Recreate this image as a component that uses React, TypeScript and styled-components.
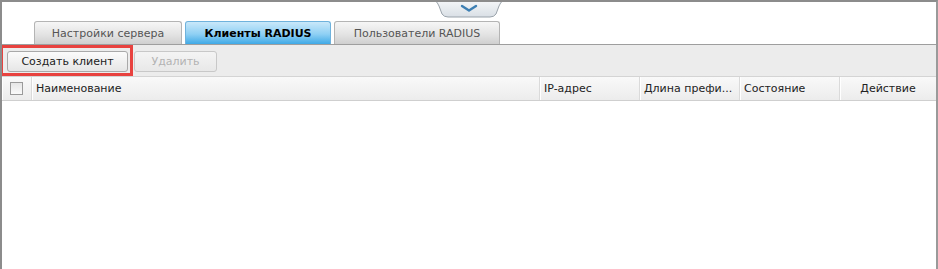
import React from "react";
import styled, { createGlobalStyle } from "styled-components";

const Global = createGlobalStyle`
  html, body { margin: 0; padding: 0; background: #fff; }
  body { font-family: "DejaVu Sans", Verdana, sans-serif; font-size: 11px; color: #222; }
`;

const Frame = styled.div`
  position: relative;
  width: 938px;
  height: 269px;
  box-sizing: border-box;
  border-top: 2px solid #8c8c8c;
  border-left: 2px solid #8c8c8c;
  border-right: 2px solid #9a9a9a;
  display: flex;
  flex-direction: column;
  background: #fff;
  overflow: hidden;
`;

const TopArea = styled.div`
  position: relative;
  height: 19px;
  display: flex;
  justify-content: center;
`;

const Toggle = styled.div`
  position: absolute;
  top: -1px;
  left: 427px;
  width: 80px;
  height: 17px;
`;

const TabsRow = styled.div`
  display: flex;
  align-items: flex-end;
  gap: 3px;
  padding-left: 32px;
  height: 23px;
`;

const Tab = styled.div<{ $active?: boolean; $w: number }>`
  box-sizing: border-box;
  width: ${(p) => p.$w}px;
  height: 23px;
  border: 1px solid ${(p) => (p.$active ? "#6fb2dc" : "#b4b4b4")};
  border-bottom: none;
  border-radius: 3px 3px 0 0;
  display: flex;
  align-items: center;
  justify-content: center;
  padding-top: 1px;
  font-weight: ${(p) => (p.$active ? "bold" : "normal")};
  color: ${(p) => (p.$active ? "#000" : "#555")};
  background: ${(p) =>
    p.$active
      ? "linear-gradient(#c9e8fa 0%, #8fd0f4 55%, #3fa9e6 100%)"
      : "linear-gradient(#f6f6f6 0%, #e2e2e2 60%, #cfcfcf 100%)"};
`;

const Toolbar = styled.div`
  position: relative;
  height: 32px;
  box-sizing: border-box;
  border-top: 1px solid #9e9e9e;
  background: #ececec;
  display: flex;
  align-items: center;
  gap: 6px;
  padding: 0 0 0 5px;
`;

const Button = styled.button<{ $w: number }>`
  box-sizing: border-box;
  width: ${(p) => p.$w}px;
  height: 21px;
  margin-top: 1px;
  font-family: inherit;
  font-size: 11px;
  border: 1px solid #a9a9a9;
  border-radius: 3px;
  background: linear-gradient(#fbfbfb, #e6e6e6);
  color: #222;
  padding: 0;
  &:disabled {
    color: #b3b3b3;
    border-color: #c8c8c8;
    background: linear-gradient(#f4f4f4, #e8e8e8);
  }
`;

const Highlight = styled.div`
  position: absolute;
  left: -2px;
  top: 0px;
  width: 133px;
  height: 31px;
  box-sizing: border-box;
  border: 3px solid #e8423f;
  pointer-events: none;
`;

const HeaderRow = styled.div`
  display: grid;
  grid-template-columns: 30px 508px 100px 100px 100px 1fr;
  height: 25px;
  box-sizing: border-box;
  border-top: 1px solid #d4d4d4;
  border-bottom: 1px solid #cfcfcf;
  background: linear-gradient(#f9f9f9, #ececec);
`;

const HeadCell = styled.div<{ $center?: boolean }>`
  display: flex;
  align-items: center;
  justify-content: ${(p) => (p.$center ? "center" : "flex-start")};
  padding: 0 4px;
  border-right: 1px solid #dadada;
  box-shadow: inset 1px 0 0 #ffffff;
  white-space: nowrap;
  overflow: hidden;
  color: #222;
  &:last-child { border-right: none; }
`;

const Check = styled.span`
  width: 11px;
  height: 11px;
  margin-left: 4px;
  border: 1px solid #9a9a9a;
  background: linear-gradient(#e6e6e6, #fafafa);
`;

const Body = styled.div`
  flex: 1;
  background: #fff;
`;

export default function App() {
  return (
    <>
      <Global />
      <Frame>
        <TopArea>
          <Toggle>
            <svg width="80" height="17" viewBox="0 0 80 17">
              <defs>
                <linearGradient id="tg" x1="0" y1="0" x2="0" y2="1">
                  <stop offset="0" stopColor="#f4f6f8" />
                  <stop offset="1" stopColor="#d9dfe5" />
                </linearGradient>
              </defs>
              <path d="M0 0 L6 0 Q8 0 10 5 L13 13 Q15 16 19 16 L61 16 Q65 16 67 13 L70 5 Q72 0 74 0 L80 0" fill="url(#tg)" stroke="#9aa3ab" strokeWidth="1" />
              <path d="M33 5 L40 9.5 L47 5" fill="none" stroke="#3d7fb3" strokeWidth="2.4" strokeLinecap="round" strokeLinejoin="round" />
            </svg>
          </Toggle>
        </TopArea>
        <TabsRow>
          <Tab $w={148}>Настройки сервера</Tab>
          <Tab $w={146} $active>Клиенты RADIUS</Tab>
          <Tab $w={166}>Пользователи RADIUS</Tab>
        </TabsRow>
        <Toolbar>
          <Button $w={121}>Создать клиент</Button>
          <Button $w={83} disabled>Удалить</Button>
          <Highlight />
        </Toolbar>
        <HeaderRow>
          <HeadCell><Check /></HeadCell>
          <HeadCell>Наименование</HeadCell>
          <HeadCell>IP-адрес</HeadCell>
          <HeadCell>Длина префи...</HeadCell>
          <HeadCell>Состояние</HeadCell>
          <HeadCell $center>Действие</HeadCell>
        </HeaderRow>
        <Body />
      </Frame>
    </>
  );
}
